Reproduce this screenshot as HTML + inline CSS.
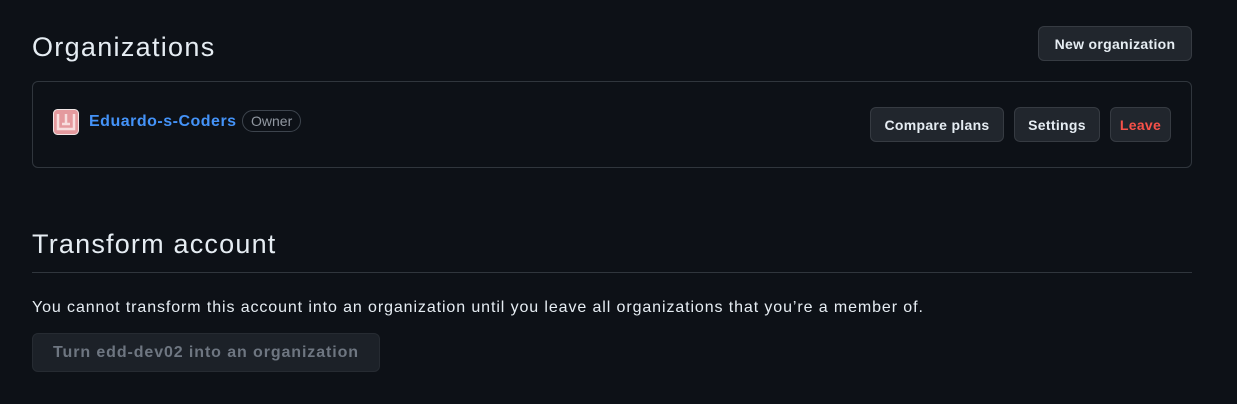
<!DOCTYPE html>
<html><head><style>
body{margin:0;background:#0d1117;width:1237px;height:404px;overflow:hidden;font-family:"Liberation Sans",sans-serif;color:#e6edf3;position:relative}
.a{position:absolute;white-space:nowrap}
.btn{position:absolute;background:#21262d;border:1px solid #363b42;border-radius:6px;box-sizing:border-box;font-size:14px;font-weight:bold;color:#e6edf3;display:flex;align-items:center;justify-content:center;letter-spacing:0.3px}
</style></head><body>
<div class="a" style="left:32px;top:30px;font-size:27px;line-height:34px;letter-spacing:1.3px">Organizations</div>
<div class="btn" style="left:1038px;top:26px;width:154px;height:35px">New organization</div>
<div class="a" style="left:32px;top:81px;width:1160px;height:87px;border:1px solid #30363d;border-radius:6px;box-sizing:border-box"></div>
<svg class="a" style="left:53px;top:109px" width="26" height="26" viewBox="0 0 26 26"><rect x="0.5" y="0.5" width="25" height="25" rx="4" fill="#e49a9e" stroke="#f0e6e6"/><path d="M5 5v15h16V5M13 5v10M9 15h8" stroke="#f7dede" stroke-width="2.5" fill="none"/></svg>
<div class="a" style="left:89px;top:113px;font-size:16px;font-weight:bold;color:#4493f8;letter-spacing:0.5px">Eduardo-s-Coders</div>
<div class="a" style="left:242px;top:110px;height:20px;padding:0 8px;border:1px solid #3d444d;border-radius:12px;font-size:14px;line-height:20px;color:#9198a1">Owner</div>
<div class="btn" style="left:870px;top:107px;width:134px;height:35px">Compare plans</div>
<div class="btn" style="left:1014px;top:107px;width:86px;height:35px">Settings</div>
<div class="btn" style="left:1110px;top:107px;width:61px;height:35px;color:#f85149">Leave</div>
<div class="a" style="left:32px;top:227px;font-size:27px;line-height:34px;letter-spacing:1.2px">Transform account</div>
<div class="a" style="left:32px;top:272px;width:1160px;height:1px;background:#30363d"></div>
<div class="a" style="left:32px;top:299px;font-size:16px;color:#e6edf3;letter-spacing:0.9px">You cannot transform this account into an organization until you leave all organizations that you’re a member of.</div>
<div class="btn" style="left:32px;top:333px;width:348px;height:39px;font-size:16px;color:#6e7681;background:#1c2128;border-color:#262b32;letter-spacing:0.9px">Turn edd-dev02 into an organization</div>
</body></html>
